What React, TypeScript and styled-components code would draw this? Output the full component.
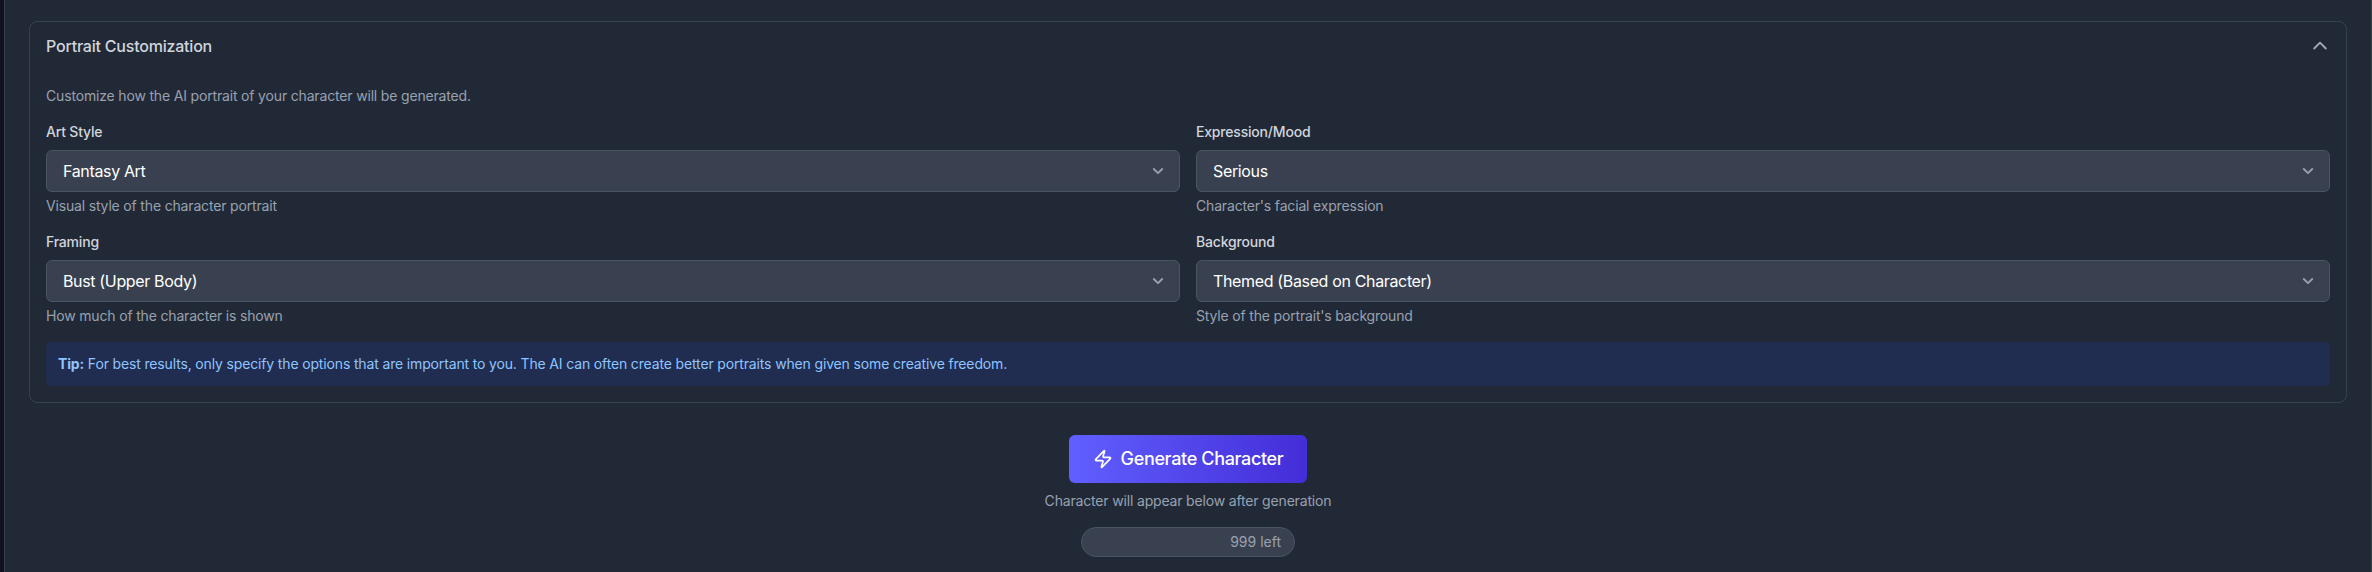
import React from "react";
import styled, { createGlobalStyle } from "styled-components";

const GlobalStyle = createGlobalStyle`
  * { box-sizing: border-box; }
  body {
    margin: 0;
    background: #10121e;
    color: #fff;
    font-family: Inter, "Liberation Sans", sans-serif;
    font-size: 16px;
    line-height: 24px;
    overflow: hidden;
  }
  p, h3 { margin: 0; }
`;

const Page = styled.div`
  height: 572px;
  padding-left: 4px;
`;

const Panel = styled.main`
  height: 100%;
  padding: 21px 24px 0;
  background: #212937;
  border: 1px solid #374050;
  border-width: 0 1px;
`;

const Card = styled.section`
  border: 1px solid #374050;
  border-radius: 8px;
`;

const CardHeader = styled.header`
  display: flex;
  align-items: center;
  justify-content: space-between;
  height: 48px;
  padding: 0 16px;
`;

const Title = styled.h3`
  font-size: 16px;
  font-weight: 500;
  letter-spacing: -0.21px;
  color: #d1d5dc;
`;

const CardBody = styled.div`
  display: flex;
  flex-direction: column;
  gap: 16px;
  padding: 16px;
`;

const Note = styled.p`
  font-size: 14px;
  line-height: 20px;
  letter-spacing: -0.17px;
  color: #99a1af;
`;

const FieldGrid = styled.div`
  display: grid;
  grid-template-columns: 1fr 1fr;
  gap: 16px;
`;

const Label = styled.div`
  margin-bottom: 8px;
  font-size: 14px;
  line-height: 20px;
  font-weight: 500;
  letter-spacing: -0.19px;
  color: #d1d5dc;
`;

const SelectBox = styled.button`
  display: flex;
  align-items: center;
  justify-content: space-between;
  width: 100%;
  height: 42px;
  margin-bottom: 4px;
  padding: 0 11px 0 16px;
  border: 1px solid #4a5464;
  border-radius: 6px;
  background: #394150;
  color: #fff;
  font: inherit;
  letter-spacing: -0.35px;
`;

const Tip = styled.div`
  padding: 12px;
  border-radius: 6px;
  background: #202c50;
  color: #8ec5ff;
  font-size: 14px;
  line-height: 20px;
  letter-spacing: -0.15px;
`;

const Actions = styled.div`
  display: flex;
  flex-direction: column;
  align-items: center;
  margin-top: 32px;
`;

const GenerateButton = styled.button`
  display: flex;
  align-items: center;
  justify-content: center;
  gap: 8px;
  width: 238px;
  height: 48px;
  margin-bottom: 8px;
  padding: 0;
  border: 0;
  border-radius: 6px;
  background: linear-gradient(to right, #615fff, #432dd7);
  color: #fff;
  font: 500 18px/28px Inter, "Liberation Sans", sans-serif;
  letter-spacing: -0.35px;
`;

const Remaining = styled.div`
  width: 214px;
  height: 30px;
  margin-top: 16px;
  padding: 4px 13px;
  border: 1px solid #4a5464;
  border-radius: 15px;
  background: #394150;
  color: #99a1af;
  font-size: 14px;
  line-height: 20px;
  text-align: right;
`;

const ChevronDown = () => (
  <svg width="20" height="20" viewBox="0 0 20 20" fill="none" stroke="#99a1af" strokeWidth="1.9" strokeLinecap="round" strokeLinejoin="round">
    <path d="M5.8 8l4.2 4.1L14.2 8" />
  </svg>
);

const ChevronUp = () => (
  <svg width="20" height="20" viewBox="0 0 24 24" fill="none" stroke="#a3abb8" strokeWidth="2.2" strokeLinecap="round" strokeLinejoin="round">
    <path d="M5 15l7-7 7 7" />
  </svg>
);

const Bolt = () => (
  <svg width="20" height="20" viewBox="0 0 24 24" fill="none" stroke="#fff" strokeWidth="2" strokeLinecap="round" strokeLinejoin="round">
    <path d="M4 14a1 1 0 0 1-.78-1.63l9.9-10.2a.5.5 0 0 1 .86.46l-1.92 6.02A1 1 0 0 0 13 10h7a1 1 0 0 1 .78 1.63l-9.9 10.2a.5.5 0 0 1-.86-.46l1.92-6.02A1 1 0 0 0 11 14z" />
  </svg>
);

const fields = [
  { label: "Art Style", value: "Fantasy Art", help: "Visual style of the character portrait" },
  { label: "Expression/Mood", value: "Serious", help: "Character's facial expression" },
  { label: "Framing", value: "Bust (Upper Body)", help: "How much of the character is shown" },
  { label: "Background", value: "Themed (Based on Character)", help: "Style of the portrait's background" },
];

export default function App() {
  return (
    <Page>
      <GlobalStyle />
      <Panel>
        <Card>
          <CardHeader>
            <Title>Portrait Customization</Title>
            <ChevronUp />
          </CardHeader>
          <CardBody>
            <Note>Customize how the AI portrait of your character will be generated.</Note>
            <FieldGrid>
              {fields.map((f) => (
                <div key={f.label}>
                  <Label>{f.label}</Label>
                  <SelectBox type="button">
                    <span>{f.value}</span>
                    <ChevronDown />
                  </SelectBox>
                  <Note>{f.help}</Note>
                </div>
              ))}
            </FieldGrid>
            <Tip>
              <strong>Tip:</strong> For best results, only specify the options that are important to you. The AI can
              often create better portraits when given some creative freedom.
            </Tip>
          </CardBody>
        </Card>
        <Actions>
          <GenerateButton type="button">
            <Bolt />
            Generate Character
          </GenerateButton>
          <Note>Character will appear below after generation</Note>
          <Remaining>999 left</Remaining>
        </Actions>
      </Panel>
    </Page>
  );
}
